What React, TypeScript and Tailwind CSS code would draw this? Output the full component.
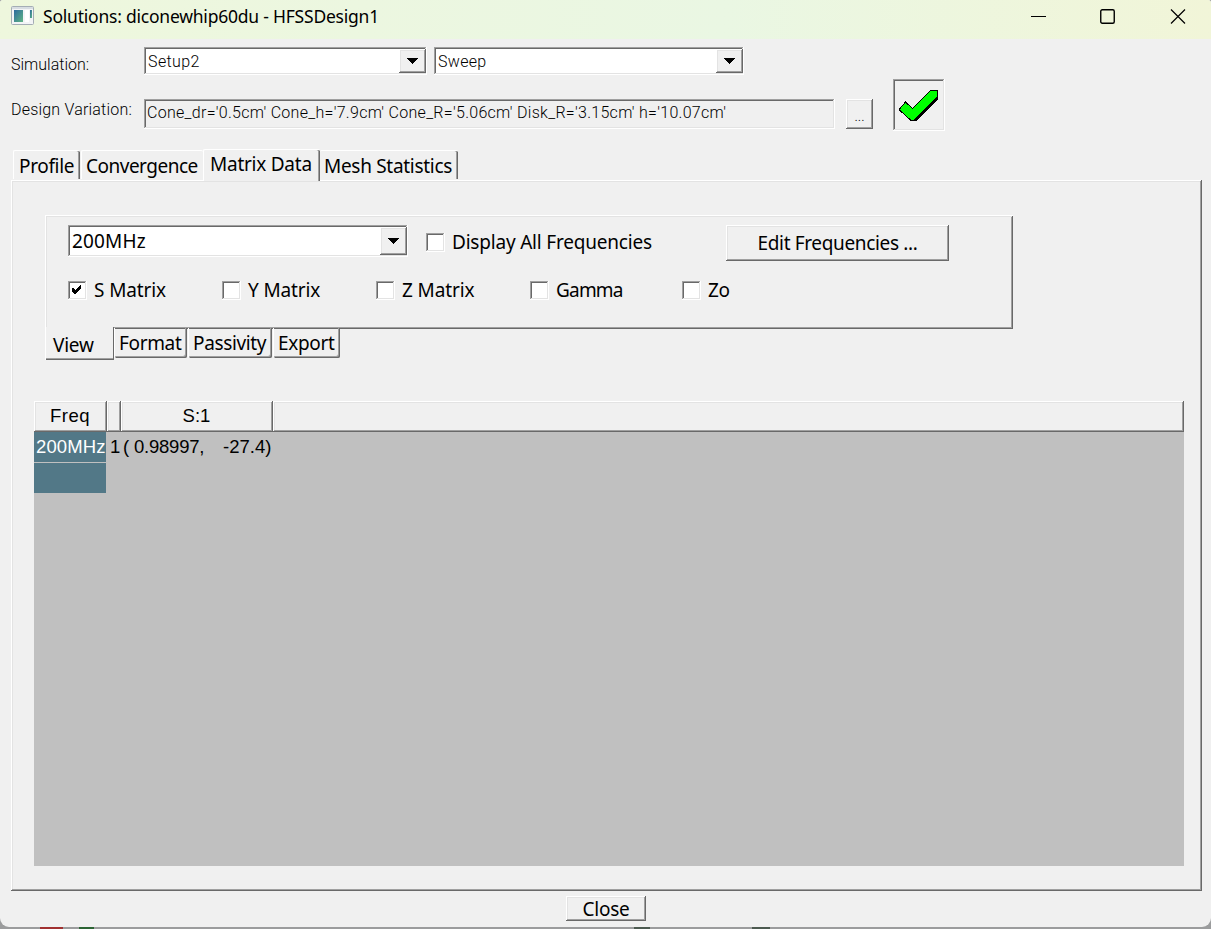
import type { ReactNode } from "react";

// Classic Win32 bevels: two 1px rings, light and dark sides swapped when sunken.
const RAISED =
  "shadow-[inset_-1px_-1px_#696969,inset_1px_1px_#fff,inset_-2px_-2px_#a0a0a0,inset_2px_2px_#e3e3e3]";
const SUNKEN =
  "shadow-[inset_-1px_-1px_#fff,inset_1px_1px_#a0a0a0,inset_-2px_-2px_#e3e3e3,inset_2px_2px_#696969]";

const UI_FONT = "font-['Noto_Sans',sans-serif] text-[19px] tracking-[-0.25px]";
const OLD_FONT = "font-[Roboto,sans-serif] font-light text-[16px]";

function Combo({ value, className }: { value: string; className: string }) {
  return (
    <div className={`flex shrink-0 bg-white p-[2px] ${SUNKEN} ${className}`}>
      <span className="flex-1 pl-[2px]">{value}</span>
      <button type="button" className={`-mr-px flex w-[27px] items-center justify-center bg-[#f0f0f0] pr-px ${RAISED}`}>
        <svg width="12" height="6" viewBox="0 0 12 6" shapeRendering="crispEdges">
          <path d="M0 0h12L6 6z" fill="#000" />
        </svg>
      </button>
    </div>
  );
}

function Check({ label, checked, className = "" }: { label: string; checked?: boolean; className?: string }) {
  return (
    <label className={`flex h-[19px] shrink-0 items-center gap-[7px] whitespace-nowrap ${className}`}>
      <span className={`flex h-[19px] w-[19px] items-center justify-center bg-white ${SUNKEN}`}>
        {checked && (
          <svg className="-mt-[2px] -ml-[2px]" width="9" height="9" viewBox="0 0 9 9" shapeRendering="crispEdges">
            <path d="M0 3v4l2 2h1l6-6V0H8L3 5 1 3z" fill="#000" />
          </svg>
        )}
      </span>
      <span className="leading-[19px]">{label}</span>
    </label>
  );
}

function TopTab({ children, className }: { children: ReactNode; className: string }) {
  return (
    <div
      className={`whitespace-nowrap rounded-t-[2px] border-t border-l border-white ${className}`}
    >
      {children}
    </div>
  );
}

function BottomTab({ children, className }: { children: ReactNode; className: string }) {
  return (
    <div
      className={`h-[30px] whitespace-nowrap rounded-b-[2px] border-l border-white pl-[4px] leading-[31px] tracking-[-0.35px] shadow-[inset_-1px_-1px_#696969,inset_-2px_-2px_#a0a0a0] ${className}`}
    >
      {children}
    </div>
  );
}

function TitleBar() {
  return (
    <header className="flex h-[39px] shrink-0 bg-linear-to-r from-[#eef7dd] via-[#eaf7e3] via-60% to-[#f1f5d8]">
      <svg className="mt-[6px] ml-[11px]" width="23" height="19" viewBox="0 0 23 19">
        <defs>
          <linearGradient id="pane" x1="0" y1="0" x2="1" y2="1">
            <stop offset="0" stopColor="#2d6a9f" />
            <stop offset="1" stopColor="#5fb583" />
          </linearGradient>
        </defs>
        <rect x="0.5" y="0.5" width="22" height="18" rx="1" fill="#f3f4f6" stroke="#a4adb5" />
        <rect x="1" y="1" width="21" height="2" fill="#d7dde2" />
        <rect x="3" y="4" width="9" height="12" fill="url(#pane)" />
        <rect x="14" y="4" width="4" height="12" fill="#fff" />
        <rect x="19" y="4" width="2" height="8" fill="url(#pane)" />
      </svg>
      <h1 className="ml-[9px] flex-1 font-['Noto_Sans',sans-serif] text-[17.5px] leading-[33px] tracking-[-0.22px]">
        Solutions: diconewhip60du - HFSSDesign1
      </h1>
      <div className="mt-[9px] mr-[25px] flex">
        <svg width="15" height="16" viewBox="0 0 15 16">
          <path d="M0 7.5h15" stroke="#000" />
        </svg>
        <svg className="ml-[54px]" width="15" height="16" viewBox="0 0 15 16" fill="none">
          <rect x="0.75" y="0.75" width="13.5" height="13.5" rx="1.5" stroke="#000" strokeWidth="1.4" />
        </svg>
        <svg className="ml-[55px]" width="16" height="16" viewBox="0 0 16 16">
          <path d="M1 0.5l14 14M15 0.5l-14 14" stroke="#000" strokeWidth="1.2" />
        </svg>
      </div>
    </header>
  );
}

function SolutionPicker() {
  return (
    <section className={`flex h-[110px] shrink-0 pl-[11px] ${OLD_FONT}`}>
      <div>
        <div className="flex pt-[8px]">
          <span className="h-[28px] w-[133px] pt-[4px] leading-[27px]">Simulation:</span>
          <Combo value="Setup2" className="h-[28px] w-[283px] leading-[25px] tracking-[0.4px]" />
          <Combo value="Sweep" className="ml-[7px] h-[28px] w-[310px] leading-[25px] tracking-[0.3px]" />
        </div>
        <div className="mt-[24px] flex">
          <span className="w-[133px] leading-[21px] tracking-[0.2px] whitespace-nowrap">Design Variation:</span>
          <div className={`h-[30px] w-[691px] pl-[3px] leading-[27px] tracking-[0.29px] whitespace-nowrap ${SUNKEN}`}>
            Cone_dr='0.5cm' Cone_h='7.9cm' Cone_R='5.06cm' Disk_R='3.15cm' h='10.07cm'
          </div>
          <button type="button" className={`ml-[11px] h-[30px] w-[27px] text-[14px] leading-[34px] ${RAISED}`}>
            ...
          </button>
        </div>
      </div>
      <button type="button" className={`mt-[40px] ml-[20px] h-[52px] w-[52px] ${SUNKEN}`}>
        <svg width="52" height="52" viewBox="0 0 52 52" shapeRendering="crispEdges">
          <path d="M7 30l6-6 6 6L38 12h7v8L23 42h-5L7 31z" fill="#000" />
          <path
            d="M6.5 30l6-7 7 6.5L37.5 11.5h7v6.5L21.5 41h-4L6.5 31z"
            fill="#00ff00"
            stroke="#000"
          />
        </svg>
      </button>
    </section>
  );
}

function MatrixOptions() {
  return (
    <div className={`ml-[34px] ${UI_FONT}`}>
      <div className="h-[114px] w-[968px] border-t border-l border-white shadow-[inset_-1px_-1px_#696969,inset_1px_1px_#e3e3e3,inset_-2px_-2px_#a0a0a0]">
        <div className="flex pt-[9px] pl-[22px]">
          <Combo value="200MHz" className="h-[32px] w-[340px] leading-[29px] tracking-[0.15px]" />
          <Check label="Display All Frequencies" className="mt-[8px] ml-[18px] w-[300px] tracking-[-0.2px]" />
          <button type="button" className={`h-[36px] w-[223px] leading-[33px] tracking-[-0.35px] ${RAISED}`}>
            Edit Frequencies ...
          </button>
        </div>
        <div className="mt-[20px] flex pl-[22px]">
          <Check label="S Matrix" checked className="w-[154px] tracking-[-0.12px]" />
          <Check label="Y Matrix" className="w-[154px] tracking-[-0.12px]" />
          <Check label="Z Matrix" className="w-[154px] tracking-[-0.12px]" />
          <Check label="Gamma" className="w-[152px] tracking-[-0.8px]" />
          <Check label="Zo" />
        </div>
      </div>
      {/* The selected tab covers the panel's lower edge by two pixels */}
      <div className="flex">
        <div className="relative -mt-[2px] h-[33px] w-[68px] border-l border-white bg-[#f0f0f0] pl-[7px] leading-[36px] shadow-[inset_0_-1px_#696969,inset_0_-2px_#a0a0a0,1px_0_#696969]">
          View
        </div>
        <BottomTab className="-mt-px ml-px w-[73px]">Format</BottomTab>
        <BottomTab className="-mt-px ml-px w-[84px]">Passivity</BottomTab>
        <BottomTab className="-mt-px ml-px w-[67px]">Export</BottomTab>
      </div>
    </div>
  );
}

function MatrixTable() {
  const head = `h-[31px] text-center leading-[29px] ${RAISED}`;
  return (
    <div className="mt-[41px] ml-[23px] flex h-[465px] w-[1150px] flex-col bg-[#c0c0c0] font-['Liberation_Sans',sans-serif] text-[18.5px] whitespace-pre">
      <div className="flex bg-[#f0f0f0]">
        <div className={`w-[73px] pr-px tracking-[0.5px] ${head}`}>Freq</div>
        <div className={`w-[14px] ${head}`} />
        <div className={`w-[152px] pr-px ${head}`}>S:1</div>
        <div className={`flex-1 ${head}`} />
      </div>
      <div className="flex h-[30px] leading-[29px]">
        <div className="w-[72px] bg-[#527887] pl-[2px] tracking-[0.1px] text-white">200MHz</div>
        <div className="w-[17px] pl-[4px]">1</div>
        <div className="w-[150px]">
          <span className="inline-block w-[100px] tracking-[-0.2px]">( 0.98997,</span>-27.4)
        </div>
      </div>
      <div className="mt-px h-[30px] w-[72px] bg-[#527887]" />
    </div>
  );
}

export default function App() {
  return (
    <div className="h-[929px] w-[1211px] overflow-hidden bg-[#9b9c9d] text-black">
      <div className="flex h-[927px] flex-col overflow-hidden rounded-t-[3px] rounded-b-[9px] bg-[#f0f0f0]">
        <TitleBar />
        <SolutionPicker />
        <nav className={`flex h-[31px] shrink-0 items-end pl-[13px] ${UI_FONT}`}>
          <TopTab className="mb-px h-[29px] w-[67px] pl-[5px] leading-[31px] tracking-[-0.35px] shadow-[inset_-1px_0_#696969,inset_-2px_0_#a0a0a0]">
            Profile
          </TopTab>
          <TopTab className="mb-px ml-px h-[29px] w-[122px] pl-[4px] leading-[31px] tracking-[-0.5px]">
            Convergence
          </TopTab>
          <TopTab className="relative h-[32px] w-[117px] translate-y-px bg-[#f0f0f0] pl-[6px] leading-[29px] shadow-[inset_-1px_0_#696969,inset_-2px_0_#a0a0a0]">
            Matrix Data
          </TopTab>
          <TopTab className="mb-px h-[29px] w-[138px] border-l-0 pl-[4px] leading-[31px] tracking-[-0.3px] shadow-[inset_-1px_0_#696969,inset_-2px_0_#a0a0a0]">
            Mesh Statistics
          </TopTab>
        </nav>
        <main className={`ml-[11px] h-[711px] w-[1191px] shrink-0 pt-[35px] ${RAISED}`}>
          <MatrixOptions />
          <MatrixTable />
        </main>
        <button
          type="button"
          className={`mt-[5px] ml-[566px] h-[25px] w-[80px] shrink-0 leading-[24px] ${UI_FONT} ${RAISED}`}
        >
          Close
        </button>
      </div>
      {/* Sliver of the 3D modeler window showing below the dialog */}
      <div className="flex h-[2px] pl-[40px]">
        <div className="w-[23px] bg-[#a03030]" />
        <div className="ml-[16px] w-[15px] bg-[#2c6434]" />
        <div className="ml-[540px] w-[16px] bg-[#4c5a50]" />
        <div className="ml-[102px] w-[18px] bg-[#4c5a50]" />
      </div>
    </div>
  );
}
